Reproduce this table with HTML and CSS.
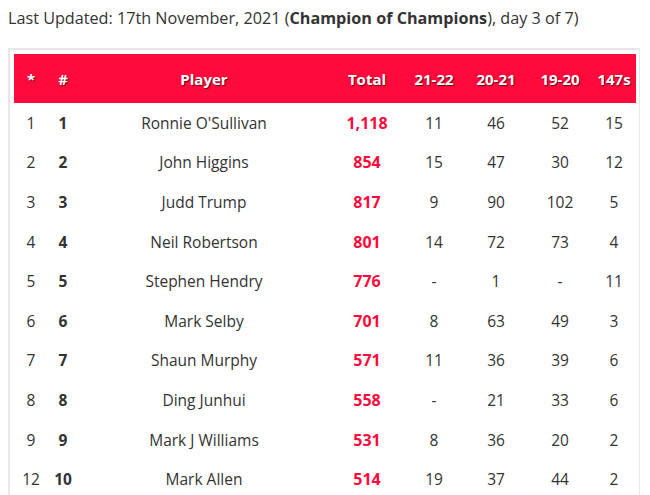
FILE: index.html
```html
<!DOCTYPE html>
<html>
<head>
<meta charset="utf-8">
<link rel="stylesheet" href="styles.css">
</head>
<body>
<p class="updated">Last Updated: 17th November, 2021 (<b>Champion of Champions</b>), day 3 of 7)</p>
<div class="card">
<table class="rank">
<colgroup>
<col class="c1"><col class="c2"><col class="c3"><col class="c4"><col class="c5"><col class="c6"><col class="c7"><col class="c8">
</colgroup>
<thead>
<tr><th>*</th><th>#</th><th>Player</th><th>Total</th><th>21-22</th><th>20-21</th><th>19-20</th><th>147s</th></tr>
</thead>
<tbody>
<tr><td>1</td><td class="pos">1</td><td>Ronnie O'Sullivan</td><td class="tot">1,118</td><td>11</td><td>46</td><td>52</td><td>15</td></tr>
<tr><td>2</td><td class="pos">2</td><td>John Higgins</td><td class="tot">854</td><td>15</td><td>47</td><td>30</td><td>12</td></tr>
<tr><td>3</td><td class="pos">3</td><td>Judd Trump</td><td class="tot">817</td><td>9</td><td>90</td><td>102</td><td>5</td></tr>
<tr><td>4</td><td class="pos">4</td><td>Neil Robertson</td><td class="tot">801</td><td>14</td><td>72</td><td>73</td><td>4</td></tr>
<tr><td>5</td><td class="pos">5</td><td>Stephen Hendry</td><td class="tot">776</td><td>-</td><td>1</td><td>-</td><td>11</td></tr>
<tr><td>6</td><td class="pos">6</td><td>Mark Selby</td><td class="tot">701</td><td>8</td><td>63</td><td>49</td><td>3</td></tr>
<tr><td>7</td><td class="pos">7</td><td>Shaun Murphy</td><td class="tot">571</td><td>11</td><td>36</td><td>39</td><td>6</td></tr>
<tr><td>8</td><td class="pos">8</td><td>Ding Junhui</td><td class="tot">558</td><td>-</td><td>21</td><td>33</td><td>6</td></tr>
<tr><td>9</td><td class="pos">9</td><td>Mark J Williams</td><td class="tot">531</td><td>8</td><td>36</td><td>20</td><td>2</td></tr>
<tr><td>12</td><td class="pos">10</td><td>Mark Allen</td><td class="tot">514</td><td>19</td><td>37</td><td>44</td><td>2</td></tr>
</tbody>
</table>
</div>
</body>
</html>
```
FILE: styles.css
```css
html, body {
  margin: 0;
  padding: 0;
  background: #fff;
}
body {
  padding: 8px;
  font-family: "Open Sans", "Noto Sans", sans-serif;
  font-size: 16px;
  color: #333;
}
.updated {
  margin: 0 0 20px 0;
  line-height: 20px;
  font-size: 16.2px;
  color: #333;
}
.updated b {
  font-weight: 700;
}
.card {
  border: 2px solid #e8e8e8;
  padding: 4px;
  border-right-width: 1px;
  width: 621px;
}
.rank {
  width: 622px;
  border-collapse: collapse;
  table-layout: fixed;
}
.c1 { width: 34px; }
.c2 { width: 30px; }
.c3 { width: 252px; }
.c4 { width: 74px; }
.c5 { width: 60px; }
.c6 { width: 64px; }
.c7 { width: 64px; }
.c8 { width: 44px; }
.rank th {
  background: #ff0a3c;
  color: #fff;
  font-weight: 700;
  font-size: 15px;
  height: 49px;
  padding: 0;
  text-align: center;
  text-shadow: 1px 1px 1px rgba(0,0,0,0.6);
}
.rank td {
  height: 39.6px;
  padding: 0;
  text-align: center;
  font-size: 15.5px;
  color: #333;
}
.rank td.pos {
  font-weight: 700;
}
.rank td.tot {
  font-weight: 700;
  font-size: 16px;
  color: #ff0a3c;
}
```
